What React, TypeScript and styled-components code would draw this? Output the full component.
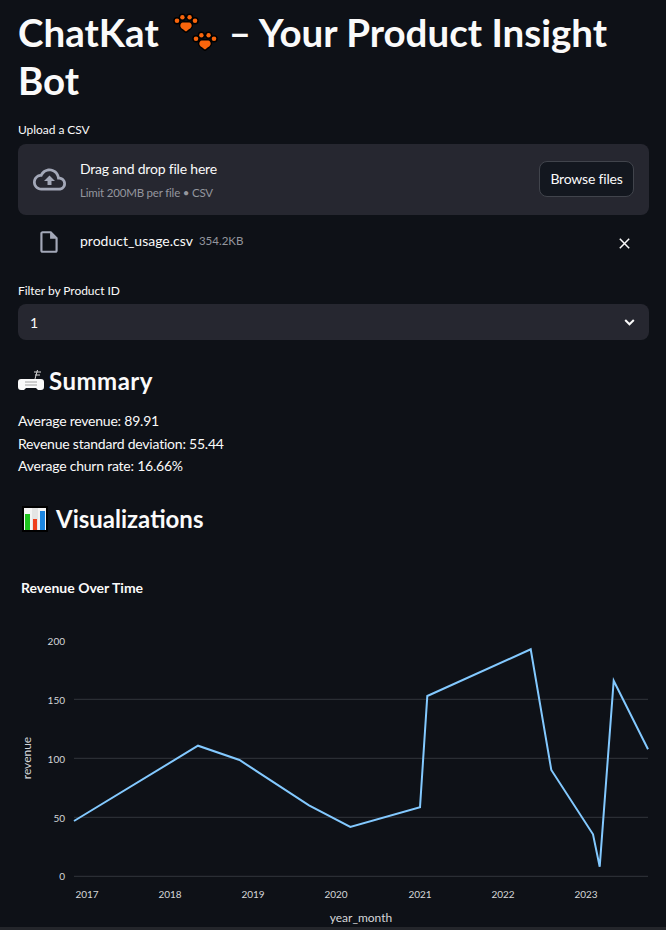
import React from "react";
import styled, { createGlobalStyle } from "styled-components";

const FONT = `Lato, "Noto Sans", sans-serif`;

const GlobalStyle = createGlobalStyle`
  html, body {
    margin: 0;
    padding: 0;
    background: #0e1117;
    color: #fafafa;
    font-family: ${FONT};
  }
`;

const Page = styled.main`
  width: 666px;
  height: 930px;
  overflow: hidden;
  box-sizing: border-box;
  padding: 0 17px 0 18px;
  position: relative;
`;

const Title = styled.h1`
  margin: 0;
  padding: 8px 0 0;
  font-size: 38.5px;
  line-height: 48px;
  font-weight: 700;
  color: #fafafa;
`;

const Paw = styled.svg`
  display: inline-block;
  width: 46px;
  height: 40px;
  vertical-align: -6px;
  margin: 0 10px 0 14px;
`;

const FieldLabel = styled.label`
  display: block;
  font-size: 12px;
  letter-spacing: -0.05px;
  line-height: 16px;
  color: #fafafa;
  margin-bottom: 6px;
`;

const UploadSection = styled.section`
  margin-top: 18px;
`;

const Dropzone = styled.div`
  height: 71px;
  background: #262730;
  border-radius: 8px;
  display: flex;
  align-items: center;
  padding: 0 15px;
  box-sizing: border-box;
`;

const DropText = styled.div`
  margin-left: 14px;
  flex: 1;
`;

const DropTitle = styled.div`
  font-size: 14px;
  letter-spacing: -0.2px;
  line-height: 20px;
`;

const DropHint = styled.div`
  font-size: 11.5px;
  letter-spacing: -0.2px;
  line-height: 16px;
  margin-top: 6px;
  color: #94969e;
`;

const BrowseButton = styled.button`
  width: 95px;
  height: 36px;
  margin-bottom: 2px;
  background: #13171f;
  border: 1px solid #41444c;
  border-radius: 8px;
  color: #fafafa;
  font: 14px ${FONT};
  letter-spacing: -0.2px;
  padding: 0;
`;

const FileRow = styled.div`
  display: flex;
  align-items: center;
  height: 54px;
  padding: 0 19px 0 18px;
`;

const FileName = styled.span`
  font-size: 14px;
  margin: 0 0 3px 18px;
`;

const FileSize = styled.span`
  font-size: 11.5px;
  color: #94969e;
  margin: 0 0 3px 6px;
  flex: 1;
`;

const CloseIcon = styled.svg`
  margin-top: 2px;
`;

const FilterSection = styled.section`
  margin-top: 14px;
`;

const FilterLabel = styled(FieldLabel)`
  margin-bottom: 5px;
`;

const Select = styled.div`
  height: 36px;
  background: #262730;
  border-radius: 8px;
  display: flex;
  align-items: center;
  justify-content: space-between;
  padding: 0 14px 0 12px;
  font-size: 14px;
`;

const SubHeading = styled.h2`
  display: flex;
  align-items: center;
  margin: 0;
  font-size: 24px;
  line-height: 32px;
  font-weight: 700;
`;

const SummaryHeading = styled(SubHeading)`
  margin-top: 25px;
  gap: 5px;
  letter-spacing: 0.5px;
`;

const VizHeading = styled(SubHeading)`
  margin-top: 25px;
  padding-left: 4px;
  gap: 8px;
`;

const Stats = styled.div`
  margin-top: 13px;
  font-size: 14px;
  letter-spacing: -0.22px;
  line-height: 22.5px;
`;

const ChartTitle = styled.h3`
  margin: 43px 0 0 3px;
  font-size: 14px;
  line-height: 20px;
  font-weight: 700;
`;

const Chart = styled.svg`
  display: block;
  position: absolute;
  left: 0;
  top: 600px;
`;

const AxisText = styled.text`
  fill: #d5d6d9;
  font-size: 10px;
  font-family: ${FONT};
`;

const AxisTitle = styled.text`
  fill: #d5d6d9;
  font-size: 12px;
  font-family: ${FONT};
`;

const BottomEdge = styled.div`
  position: absolute;
  left: 0;
  right: 0;
  bottom: 0;
  height: 3px;
  background: #24262b;
`;

const PawPrint = ({ x, y }: { x: number; y: number }) => (
  <g transform={`translate(${x} ${y})`} stroke="#000" strokeWidth="3" fill="#f9650c" paintOrder="stroke" strokeLinejoin="round">
    <path d="M12 17.5C9 15 5.5 14 6.5 10.5 7.3 7.8 10 8.5 12 8.5s4.7-.7 5.5 2C18.5 14 15 15 12 17.5Z" />
    <circle cx="3" cy="6.8" r="2.3" />
    <circle cx="8.4" cy="3.2" r="2.2" />
    <circle cx="15.6" cy="3.2" r="2.2" />
    <circle cx="21" cy="6.8" r="2.3" />
  </g>
);

const linePoints = "74,821 198,745.7 239.5,760 309,805.4 350.3,827 420,807.3 427.3,696 530.7,649.3 551.3,770 593,834.3 599.7,866.7 613.7,680.7 648,749.3";
const gridLines = [699.3, 758.3, 817.3, 876.3];
const yTicks: [string, number][] = [["200", 641], ["150", 700], ["100", 759], ["50", 818], ["0", 876.5]];
const xTicks: [string, number][] = [["2017", 87], ["2018", 170], ["2019", 253], ["2020", 336], ["2021", 420], ["2022", 503], ["2023", 586]];

export default function App() {
  return (
    <>
      <GlobalStyle />
      <Page>
        <Title>
          <span>ChatKat</span>
          <Paw viewBox="0 0 46 40">
            <PawPrint x={1} y={1} />
            <PawPrint x={20} y={19} />
          </Paw>
          <span>– Your Product Insight</span> <span>Bot</span>
        </Title>

        <UploadSection>
          <FieldLabel>Upload a CSV</FieldLabel>
          <Dropzone>
            <svg width="33" height="33" viewBox="0 0 24 24" fill="#a3a8b8">
              <path d="M19.35 10.04C18.67 6.59 15.64 4 12 4 9.11 4 6.6 5.64 5.35 8.04 2.34 8.36 0 10.91 0 14c0 3.31 2.69 6 6 6h13c2.76 0 5-2.24 5-5 0-2.64-2.05-4.78-4.65-4.96zM19 18H6c-2.21 0-4-1.79-4-4 0-2.05 1.53-3.76 3.56-3.97l1.07-.11.5-.95C8.08 7.14 9.94 6 12 6c2.62 0 4.88 1.86 5.39 4.43l.3 1.5 1.53.11c1.56.1 2.78 1.41 2.78 2.96 0 1.65-1.35 3-3 3zM8 13h2.55v3h2.9v-3H16l-4-4z" />
            </svg>
            <DropText>
              <DropTitle>Drag and drop file here</DropTitle>
              <DropHint>Limit 200MB per file • CSV</DropHint>
            </DropText>
            <BrowseButton>Browse files</BrowseButton>
          </Dropzone>
          <FileRow>
            <svg width="26" height="26" viewBox="0 0 24 24" fill="#a3a8b8">
              <path d="M14 2H6c-1.1 0-1.99.9-1.99 2L4 20c0 1.1.89 2 1.99 2H18c1.1 0 2-.9 2-2V8l-6-6zM6 20V4h7v5h5v11H6z" />
            </svg>
            <FileName>product_usage.csv</FileName>
            <FileSize>354.2KB</FileSize>
            <CloseIcon width="11" height="11" viewBox="0 0 11 11" stroke="#fafafa" strokeWidth="1.5">
              <path d="M.8.8l9.4 9.4M10.2.8L.8 10.2" />
            </CloseIcon>
          </FileRow>
        </UploadSection>

        <FilterSection>
          <FilterLabel>Filter by Product ID</FilterLabel>
          <Select>
            <span>1</span>
            <svg width="11" height="7" viewBox="0 0 11 7" fill="none" stroke="#fafafa" strokeWidth="2">
              <path d="M1.2 1l4.3 4.3L9.8 1" />
            </svg>
          </Select>
        </FilterSection>

        <SummaryHeading>
          <svg width="26" height="24" viewBox="0 0 26 24">
            <path d="M3 10h20a3 3 0 0 1 3 3v5a3 3 0 0 1-3 3h-3l-2-2H8l-2 2H3a3 3 0 0 1-3-3v-5a3 3 0 0 1 3-3Z" fill="#fafafa" />
            <path d="M17 10l2.5-9M16 3h7M17 6h5" stroke="#d8d8d8" strokeWidth="1" />
            <path d="M7 13h12M7 16h12" stroke="#8a8a8a" strokeWidth="0.8" />
          </svg>
          Summary
        </SummaryHeading>
        <Stats>
          <div>Average revenue: 89.91</div>
          <div>Revenue standard deviation: 55.44</div>
          <div>Average churn rate: 16.66%</div>
        </Stats>

        <VizHeading>
          <svg width="26" height="26" viewBox="0 0 26 26">
            <rect width="26" height="26" fill="#000" />
            <rect x="2" y="2" width="22" height="22" fill="#f4f4f4" />
            <rect x="10" y="2" width="6" height="22" fill="#e4e4e4" />
            <rect x="3" y="8" width="5" height="16" fill="#1ec41e" />
            <rect x="11" y="13" width="4" height="11" fill="#ef3f1c" />
            <rect x="18" y="5" width="5" height="19" fill="#1c86e0" />
          </svg>
          Visualizations
        </VizHeading>

        <ChartTitle>Revenue Over Time</ChartTitle>

        <Chart width="666" height="330" viewBox="0 600 666 330">
          {gridLines.map((y) => (
            <line key={y} x1="74" x2="648" y1={y} y2={y} stroke="#33363c" strokeWidth="1" />
          ))}
          {yTicks.map(([label, y]) => (
            <AxisText key={label} x="65" y={y + 3.5} textAnchor="end">{label}</AxisText>
          ))}
          {xTicks.map(([label, x]) => (
            <AxisText key={label} x={x} y="898" textAnchor="middle">{label}</AxisText>
          ))}
          <polyline points={linePoints} fill="none" stroke="#83c9ff" strokeWidth="2" />
          <AxisTitle x="361" y="922" textAnchor="middle">year_month</AxisTitle>
          <AxisTitle transform="translate(31 758) rotate(-90)" textAnchor="middle">revenue</AxisTitle>
        </Chart>
        <BottomEdge />
      </Page>
    </>
  );
}
